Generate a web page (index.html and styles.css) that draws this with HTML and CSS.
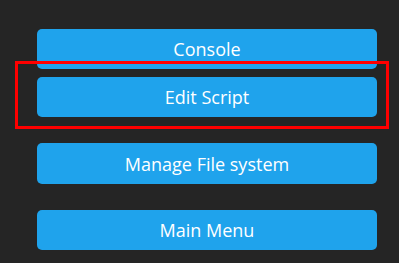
FILE: index.html
```html
<!DOCTYPE html>
<html>
<head>
<meta charset="utf-8">
<link rel="stylesheet" href="styles.css">
</head>
<body>
<div class="menu">
  <div class="btn first">Console</div>
  <div class="btn highlighted">Edit Script<span class="mark"></span></div>
  <div class="btn tall">Manage File system</div>
  <div class="btn">Main Menu</div>
</div>
</body>
</html>
```
FILE: styles.css
```css
html, body {
  margin: 0;
  padding: 0;
  background: #252525;
  width: 399px;
  height: 263px;
  overflow: hidden;
}
.menu {
  display: flex;
  flex-direction: column;
  padding: 29px 0 0 37px;
  width: 340px;
}
.btn {
  height: 40px;
  background: #1fa3ec;
  border-radius: 5px;
  color: #ffffff;
  font-family: "Open Sans", sans-serif;
  font-size: 18px;
  display: flex;
  align-items: center;
  justify-content: center;
  margin-bottom: 26px;
}
.btn.first {
  margin-bottom: 8px;
}
.btn.tall {
  height: 41px;
}
.highlighted {
  position: relative;
}
.mark {
  position: absolute;
  left: -22px;
  top: -16px;
  right: -12px;
  bottom: -12px;
  border: 3px solid #ff0000;
}
```
